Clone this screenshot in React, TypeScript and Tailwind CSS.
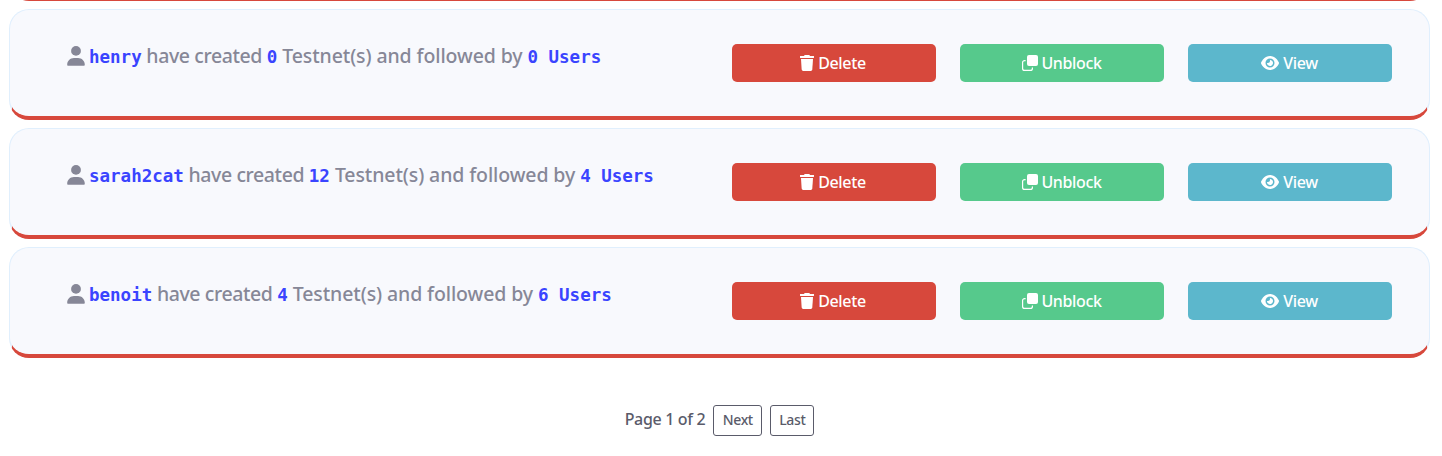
import React from "react";
import { FaEye } from "react-icons/fa6";

const users = [
  { name: "henry", testnets: 0, followers: 0 },
  { name: "sarah2cat", testnets: 12, followers: 4 },
  { name: "benoit", testnets: 4, followers: 6 },
];

function UserIcon() {
  return (
    <svg className="mr-1 h-5 w-[18px] shrink-0" viewBox="0 0 18 20" fill="currentColor">
      <circle cx="9" cy="4.9" r="4.9" />
      <path d="M0.2 18.8C0.2 14.8 3.2 12 7 12h4c3.8 0 6.8 2.8 6.8 6.8 0 .6-.5 1-1 1H1.200c-.6 0-1-.4-1-1z" />
    </svg>
  );
}

function TrashIcon() {
  return (
    <svg className="h-4 w-3.5 shrink-0" viewBox="0 0 14 16" fill="currentColor">
      <path d="M0.300 1H4l.5-.7c.1-.2.3-.3.5-.3h4c.2 0 .4.100.5.300L10 1h3.700c.2 0 .3.200.3.400V2.600c0 .2-.1.400-.3.400H.3C.1 3 0 2.800 0 2.600V1.400C0 1.200.1 1 .3 1z" />
      <path d="M1 4h12l-.7 10.600c-.1.800-.7 1.400-1.500 1.400H3.200c-.8 0-1.400-.6-1.500-1.400z" />
    </svg>
  );
}

function CloneIcon() {
  return (
    <svg className="size-4 shrink-0" viewBox="0 0 16 16" fill="none">
      <rect x="5" y="0" width="11" height="11" rx="2" fill="currentColor" />
      <path
        d="M3.6 5.6H2.6a2 2 0 0 0-2 2v5.8a2 2 0 0 0 2 2h5.8a2 2 0 0 0 2-2v-1"
        stroke="currentColor"
        strokeWidth="1.2"
      />
    </svg>
  );
}

function Mono({ children }: { children: React.ReactNode }) {
  return (
    <span className="font-['DejaVu_Sans_Mono',monospace] text-[17.5px] font-bold tracking-normal text-[#3a44ff]">
      {children}
    </span>
  );
}

function ActionButton({
  className,
  icon,
  label,
}: {
  className: string;
  icon: React.ReactNode;
  label: string;
}) {
  return (
    <button
      className={`flex h-[38px] w-[204px] items-center justify-center text-base font-medium tracking-[-0.35px] text-white rounded-[5px] ${className}`}
    >
      {icon}
      <span className="leading-6">{label}</span>
    </button>
  );
}

function UserCard({ name, testnets, followers }: (typeof users)[number]) {
  return (
    <div className="flex h-[111px] items-start justify-between rounded-[20px] border border-b-4 border-[#e0effd] border-b-[#d7483c] bg-[#f8f9fd] pl-[57px] pr-[37px] pt-[34px]">
      <p className="flex h-6 items-center whitespace-pre text-[19.5px] font-medium leading-6 tracking-[-0.4px] text-[#868797]">
        <UserIcon />
        <span>
          <Mono>{name}</Mono> have created <Mono>{testnets}</Mono>
          <span className="tracking-[-0.1px]"> Testnet(s) and followed by </span>
          <Mono>{followers} Users</Mono>
        </span>
      </p>
      <div className="flex gap-6">
        <ActionButton className="gap-1 bg-[#d7483c] pr-0.5" icon={<TrashIcon />} label="Delete" />
        <ActionButton className="gap-[3px] bg-[#56c98c]" icon={<CloneIcon />} label="Unblock" />
        <ActionButton className="gap-1 bg-[#5cb7cc] pr-px" icon={<FaEye className="h-4 w-[18px]" />} label="View" />
      </div>
    </div>
  );
}

export default function App() {
  return (
    <main className="h-[456px] overflow-hidden bg-white pl-[9px] pr-3 font-['Noto_Sans',sans-serif]">
      <div className="flex h-px flex-col justify-end overflow-hidden">
        <div className="h-[111px] shrink-0 rounded-[20px] border border-b-4 border-[#e0effd] border-b-[#d7483c] bg-[#f8f9fd]" />
      </div>
      <div className="mt-2 flex flex-col gap-2">
        {users.map((user) => (
          <UserCard key={user.name} {...user} />
        ))}
      </div>
      <nav className="mt-[47px] flex items-center justify-center gap-2 font-medium text-[#5a5b6a]">
        <span className="-mt-[3px] text-base leading-6 tracking-[-0.33px]">Page 1 of 2</span>
        <button className="h-[31px] w-[49px] rounded-[3px] border border-[#5a5b6a] pb-0.5 text-sm tracking-[-0.4px]">Next</button>
        <button className="h-[31px] w-11 rounded-[3px] border border-[#5a5b6a] pb-0.5 text-sm tracking-[-0.4px]">Last</button>
      </nav>
    </main>
  );
}
